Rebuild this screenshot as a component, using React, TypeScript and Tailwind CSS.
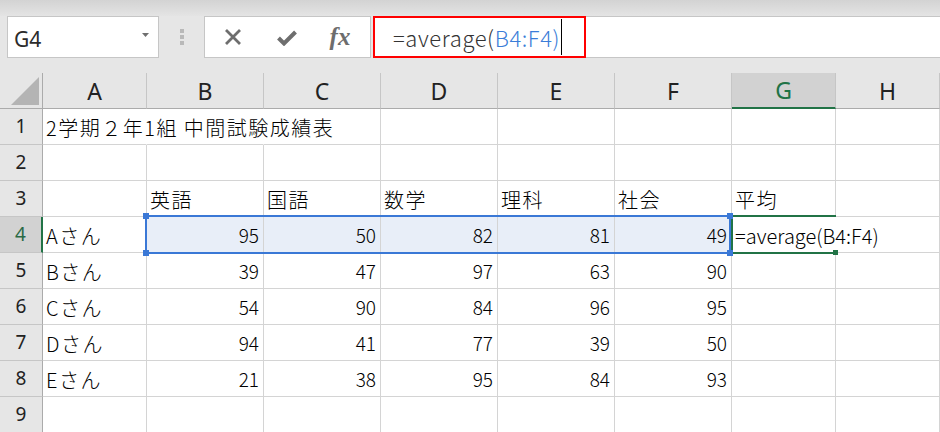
import React from "react";

type V = string | number | null;

const data: V[][] = [
  ["2学期２年1組 中間試験成績表"],
  [],
  [null, "英語", "国語", "数学", "理科", "社会", "平均"],
  ["Aさん", 95, 50, 82, 81, 49, "=average(B4:F4)"],
  ["Bさん", 39, 47, 97, 63, 90],
  ["Cさん", 54, 90, 84, 96, 95],
  ["Dさん", 94, 41, 77, 39, 50],
  ["Eさん", 21, 38, 95, 84, 93],
  [],
];

const letters = ["A", "B", "C", "D", "E", "F", "G", "H"];

function Cell({ v, r, c }: { v: V; r: number; c: number }) {
  const hideRight = (r === 0 && (c === 0 || c === 1)) || (r === 3 && c === 6);
  const selected = r === 3 && c >= 1 && c <= 5;
  const isNum = typeof v === "number";
  const isFormula = r === 3 && c === 6;
  const cls = [
    "box-border border-b border-r border-b-[#d4d4d4] flex items-center whitespace-nowrap overflow-visible text-black font-light",
    hideRight ? "border-r-transparent" : "border-r-[#d4d4d4]",
    selected ? "bg-[#e8eef8]" : "",
    isNum
      ? "justify-end pr-[4px] text-[19px] pt-[2px]"
      : isFormula
      ? "justify-start pl-[3px] text-[20px] pt-[2px]"
      : "justify-start pl-[3px] text-[20px] tracking-[1.5px] pt-[2px]",
  ].join(" ");
  return <div className={cls}>{v === null || v === undefined ? "" : String(v)}</div>;
}

export default function App() {
  return (
    <div className="w-[940px] h-[432px] overflow-hidden bg-[#e6e6e6] font-['Noto_Sans_CJK_JP','Noto_Sans',sans-serif]">
      {/* top strip */}
      <div className="h-[16px] bg-gradient-to-b from-[#d3d3d3] to-[#e4e4e4]" />
      {/* formula bar */}
      <div className="flex h-[42px] items-stretch">
        <div className="ml-[7px] w-[152px] box-border border border-[#c6c6c6] bg-white flex items-center justify-between pl-[6px] pr-[9px]">
          <span className="font-['Noto_Sans',sans-serif] text-[21px] text-[#2b2b2b] pt-[4px] leading-none">G4</span>
          <svg width="7" height="4" viewBox="0 0 7 4" className="mt-[-4px]">
            <path d="M0 0 L7 0 L3.5 4 Z" fill="#6f6f6f" />
          </svg>
        </div>
        <div className="w-[45px] flex flex-col items-center justify-center gap-[2px]">
          <div className="w-[4px] h-[4px] bg-[#b9b9b9]" />
          <div className="w-[4px] h-[4px] bg-[#b9b9b9]" />
          <div className="w-[4px] h-[4px] bg-[#b9b9b9]" />
        </div>
        <div className="w-[167px] box-border border border-[#c6c6c6] bg-white flex items-center pl-[1px]">
          <div className="w-[54px] flex justify-center">
            <svg width="18" height="18" viewBox="0 0 18 18">
              <path d="M2 2 L16 16 M16 2 L2 16" stroke="#6e6e6e" strokeWidth="2.8" fill="none" />
            </svg>
          </div>
          <div className="w-[54px] flex justify-center pt-[2px]">
            <svg width="20" height="16" viewBox="0 0 20 16">
              <path d="M1.5 8 L7 13.5 L18.5 2" stroke="#6e6e6e" strokeWidth="4" fill="none" />
            </svg>
          </div>
          <div className="w-[54px] flex justify-center">
            <span className="font-['Liberation_Serif',serif] italic font-bold text-[25px] text-[#6d6d6d] leading-none pb-[1px] pr-[2px]">
              fx
            </span>
          </div>
        </div>
        <div className="ml-[2px] flex-1 flex">
          <div className="w-[213px] box-border border-2 border-[#ff0000] bg-white flex items-center pl-[18px]">
            <span className="text-[22px] font-light tracking-[0.6px] leading-none text-[#333333] whitespace-nowrap pb-[1px]">
              =average(<span className="text-[#3b7dd8]">B4:F4)</span>
            </span>
            <div className="ml-[1px] w-[1px] h-[36px] bg-black" />
          </div>
          <div className="flex-1 box-border border-y border-[#c6c6c6] bg-white" />
        </div>
      </div>
      <div className="h-[15px]" />
      {/* grid */}
      <div className="relative bg-white grid grid-cols-[43px_104px_117px_117px_117px_117px_117px_104px_104px] auto-rows-[36px]">
        {/* corner */}
        <div className="box-border bg-[#e6e6e6] border-r border-b border-r-[#ababab] border-b-[#ababab] flex items-end justify-end pr-[3px] pb-[3px]">
          <svg width="28" height="28" viewBox="0 0 28 28">
            <path d="M28 0 L28 28 L0 28 Z" fill="#b4b4b4" />
          </svg>
        </div>
        {letters.map((l, i) =>
          i === 6 ? (
            <div
              key={l}
              className="box-border bg-[#d2d2d2] border-r border-r-[#c6c6c6] border-b-2 border-b-[#217346] flex items-center justify-center font-['Noto_Sans',sans-serif] text-[23px] text-[#217346] pt-[1px]"
            >
              {l}
            </div>
          ) : (
            <div
              key={l}
              className="box-border bg-[#e6e6e6] border-r border-r-[#c6c6c6] border-b border-b-[#ababab] flex items-center justify-center font-['Noto_Sans',sans-serif] text-[23px] text-[#222222] pt-[1px]"
            >
              {l}
            </div>
          )
        )}
        {data.map((row, r) => (
          <React.Fragment key={r}>
            {r === 3 ? (
              <div className="box-border bg-[#d2d2d2] border-b border-b-[#c6c6c6] border-r-2 border-r-[#217346] flex items-center justify-center font-['Noto_Sans',sans-serif] text-[19px] text-[#2a6a45]">
                {r + 1}
              </div>
            ) : (
              <div className="box-border bg-[#e6e6e6] border-b border-b-[#c6c6c6] border-r border-r-[#ababab] flex items-center justify-center font-['Noto_Sans',sans-serif] text-[19px] text-[#222222]">
                {r + 1}
              </div>
            )}
            {Array.from({ length: 8 }).map((_, c) => (
              <Cell key={c} v={row[c] ?? null} r={r} c={c} />
            ))}
          </React.Fragment>
        ))}
        {/* active cell G4 */}
        <div className="absolute left-[731px] top-[142px] w-[105px] h-[39px] box-border border-t-2 border-b-2 border-l-2 border-[#217346]">
          <div className="absolute right-[-2px] bottom-[-3px] w-[5px] h-[5px] bg-[#217346]" />
        </div>
        {/* range B4:F4 */}
        <div className="absolute left-[145px] top-[142px] w-[586px] h-[39px] box-border border-2 border-[#3a78d6]">
          <div className="absolute left-[-4px] top-[-4px] w-[6px] h-[6px] bg-[#3a78d6]" />
          <div className="absolute left-[-4px] bottom-[-4px] w-[6px] h-[6px] bg-[#3a78d6]" />
          <div className="absolute right-[-4px] top-[-4px] w-[6px] h-[6px] bg-[#3a78d6]" />
          <div className="absolute right-[-4px] bottom-[-4px] w-[6px] h-[6px] bg-[#3a78d6]" />
        </div>
      </div>
    </div>
  );
}
